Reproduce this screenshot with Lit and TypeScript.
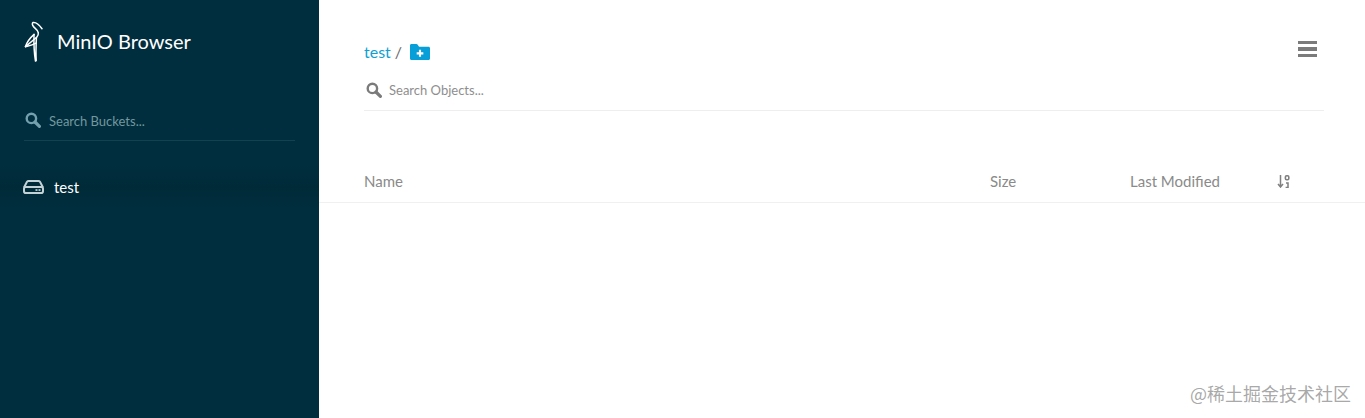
import { LitElement, html, css } from "lit";
import { customElement } from "lit/decorators.js";

const searchIcon = html`<svg viewBox="0 0 16 16" width="16" height="16" fill="none" stroke="currentColor">
  <circle cx="6.4" cy="6.4" r="4.7" stroke-width="2.4"></circle>
  <path d="M10 10l4.4 4.4" stroke-width="3.2" stroke-linecap="round"></path>
</svg>`;

@customElement("app-root")
export class AppRoot extends LitElement {
  static styles = css`
    :host {
      display: block;
      width: 1365px;
      height: 418px;
      overflow: hidden;
      font-family: Lato, "Noto Sans", sans-serif;
      background: #fff;
    }
    .page { display: flex; height: 418px; position: relative; }
    .side {
      width: 319px;
      flex: none;
      background: #002e3e;
      color: #fff;
      display: flex;
      flex-direction: column;
    }
    .brand {
      display: flex;
      align-items: center;
      height: 40px;
      margin-top: 21px;
      padding-left: 24px;
      gap: 12px;
    }
    .brand-name { font-size: 20px; line-height: 24px; color: #fff; }
    .side-search {
      margin: 50px 24px 0 24px;
      height: 29px;
      border-bottom: 1px solid #124150;
      display: flex;
      align-items: flex-start;
      gap: 8px;
      color: #73989f;
      font-size: 13px;
      line-height: 20px;
      padding-left: 1px;
    }
    .side-search svg { margin-top: 1px; color: #73a0ac; }
    .bucket {
      margin-top: 24px;
      height: 44px;
      display: flex;
      align-items: center;
      gap: 10px;
      padding-left: 23px;
      font-size: 15px;
      color: #fff;
      background: linear-gradient(#002e3e, #002a38 50%, #002e3e);
    }
    .main { flex: 1; min-width: 0; display: flex; flex-direction: column; }
    .head { padding: 0 41px 0 45px; height: 111px; box-sizing: border-box; }
    .crumbs {
      display: flex;
      align-items: center;
      height: 24px;
      margin-top: 39px;
      font-size: 16px;
      color: #0fa0d2;
    }
    .slash { color: #6b6b6b; margin-left: 4px; }
    .crumbs svg { margin-left: 8px; margin-top: 2px; }
    .menu {
      margin-left: auto;
      margin-right: 7px;
      margin-top: -4px;
      display: flex;
      flex-direction: column;
      gap: 3px;
    }
    .menu i { display: block; width: 19px; height: 3.5px; background: #7b7b7b; }
    .obj-search {
      display: flex;
      align-items: center;
      gap: 7px;
      height: 48px;
      box-sizing: border-box;
      border-bottom: 1px solid #eeeeee;
      padding: 6px 0 0 2px;
      font-size: 13px;
      color: #8e8e8e;
    }
    .obj-search svg { color: #7b7b7b; }
    .cols {
      margin-top: 48px;
      height: 44px;
      box-sizing: border-box;
      border-bottom: 1px solid #f0f0f0;
      display: grid;
      grid-template-columns: 626px 140px 147px auto;
      padding: 0 0 0 45px;
      align-items: center;
      font-size: 15px;
      color: #8a8a8a;
    }
    .sort { display: flex; margin-top: 1px; }
    .mark {
      position: absolute;
      right: 14px;
      top: 382px;
      font-size: 18px;
      line-height: 22px;
      color: rgba(130, 130, 130, 0.7);
      font-family: "Noto Sans CJK SC", Lato, sans-serif;
    }
  `;

  render() {
    return html`<div class="page">
      <aside class="side">
        <div class="brand">
          <svg width="21" height="41" viewBox="0 0 21 41" fill="none" stroke="#fff" stroke-width="1.5" stroke-linecap="round" stroke-linejoin="round">
            <path d="M9 1.5c3-.6 5.5 1.2 9 6.2"></path>
            <path d="M8.5 2c-.8 2 .4 3.4 3 5.6 3 2.6 4 5.6 1.2 8.6L1.5 25.6"></path>
            <path d="M1.5 25.6c2 -.6 5.5 -.6 10.5 -3.4"></path>
            <path d="M1.5 25.6c1.6-5 4.5-8.6 8.6-12.2"></path>
            <path d="M10 13.5c-.2 8 0 18 1.5 26.5l.7-.4c-.4-7-.2-15 .2-23"></path>
          </svg>
          <span class="brand-name">MinIO Browser</span>
        </div>
        <div class="side-search">${searchIcon}<span>Search Buckets...</span></div>
        <div class="bucket">
          <svg width="21" height="14" viewBox="0 0 21 14" fill="none">
            <path d="M1 7.5l3-5.7C4.4 1.2 5 1 5.6 1h9.8c.6 0 1.2.2 1.6.8L20 7.5" stroke="#c3d2d6" stroke-width="2"></path>
            <rect x="1" y="7" width="19" height="6" rx="1.8" stroke="#c3d2d6" stroke-width="2"></rect>
            <rect x="12.5" y="9.2" width="2" height="1.7" fill="#c3d2d6"></rect>
            <rect x="15.5" y="9.2" width="2" height="1.7" fill="#c3d2d6"></rect>
          </svg>
          <span>test</span>
        </div>
      </aside>
      <main class="main">
        <div class="head">
          <div class="crumbs">
            <span>test</span><span class="slash">/</span>
            <svg width="20" height="16" viewBox="0 0 21 16" preserveAspectRatio="none">
              <path fill="#089fd8" d="M0 1.5C0 .6.6 0 1.5 0h5.2c.5 0 .9.2 1.2.6L9.5 2.8h10c.8 0 1.5.7 1.5 1.5v10.2c0 .8-.7 1.5-1.5 1.5h-18C.7 16 0 15.3 0 14.5z"></path>
              <path stroke="#fff" stroke-width="2.2" d="M10.5 5.8v7M7 9.3h7"></path>
            </svg>
            <div class="menu"><i></i><i></i><i></i></div>
          </div>
          <div class="obj-search">${searchIcon}<span>Search Objects...</span></div>
        </div>
        <div class="cols">
          <span>Name</span><span>Size</span><span>Last Modified</span>
          <span class="sort">
            <svg width="13" height="13" viewBox="0 0 13 13" fill="none">
              <path d="M3.5 0v11.5M1 9l2.5 3L6 9" stroke="#808080" stroke-width="1.5"></path>
              <rect x="8.4" y="0.8" width="3.4" height="4" rx="1.2" stroke="#808080" stroke-width="1.6"></rect>
              <path d="M9 8h2v4.5M8.6 12.5h3.2" stroke="#808080" stroke-width="1.5"></path>
            </svg>
          </span>
        </div>
      </main>
      <div class="mark">@稀土掘金技术社区</div>
    </div>`;
  }
}
